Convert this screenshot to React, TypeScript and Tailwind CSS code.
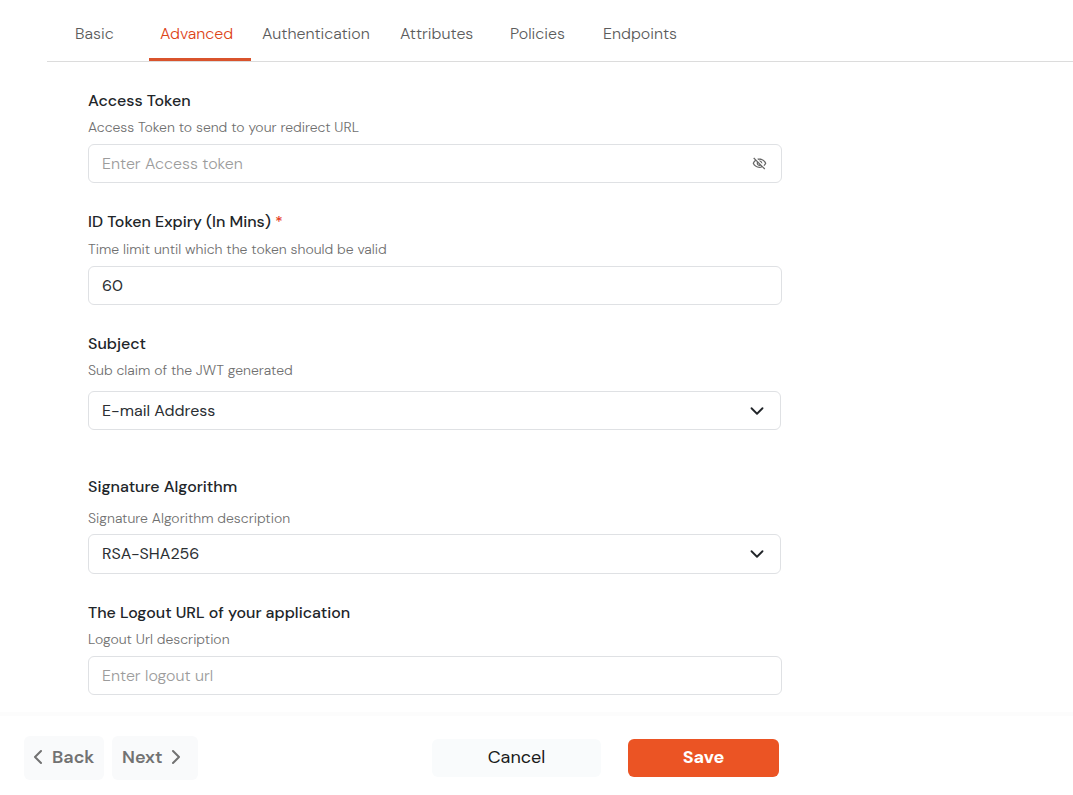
import type { ReactNode } from "react";
import { ChevronDown, ChevronLeft, ChevronRight } from "lucide-react";
import { MdOutlineVisibilityOff } from "react-icons/md";
import clsx from "clsx";

const tabs = [
  { label: "Basic", width: "w-[85px]" },
  { label: "Advanced", width: "w-[102px]", active: true },
  { label: "Authentication", width: "w-[138px]" },
  { label: "Attributes", width: "w-[110px]" },
  { label: "Policies", width: "w-[93px]" },
  { label: "Endpoints", width: "w-[102px]" },
];

const control =
  "block w-full rounded-md border border-[#dfe1e4] bg-white px-[13px] text-base text-[#2b2f33] outline-none placeholder:font-light placeholder:text-[#9c9c9c] focus:border-[#eb5424]";

type FieldProps = {
  id: string;
  label: string;
  hint: string;
  required?: boolean;
  hintClass: string;
  className?: string;
  children: ReactNode;
};

function Field({ id, label, hint, required, hintClass, className, children }: FieldProps) {
  return (
    <div className={className}>
      <label htmlFor={id} className="block text-base leading-6 font-medium text-[#212529]">
        {label}
        {required && <span className="text-[#e5391c]"> *</span>}
      </label>
      <p id={`${id}-hint`} className={clsx("text-sm leading-5 font-light text-[#6f6f6f]", hintClass)}>
        {hint}
      </p>
      {children}
    </div>
  );
}

function SelectBox({ id, options, className }: { id: string; options: string[]; className: string }) {
  return (
    <div className="relative mr-px">
      <select id={id} aria-describedby={`${id}-hint`} className={clsx(control, "appearance-none pr-12", className)}>
        {options.map((o) => (
          <option key={o}>{o}</option>
        ))}
      </select>
      <ChevronDown className="pointer-events-none absolute inset-y-0 right-[13px] my-auto size-[22px] text-[#212529]" aria-hidden />
    </div>
  );
}

export default function App() {
  return (
    <div className="flex min-h-screen flex-col bg-white font-['DM_Sans','Inter',sans-serif]">
      <nav className="ml-[47px] flex border-b border-[#dcdcdc] pl-[17px]">
        {tabs.map((tab) => (
          <button
            key={tab.label}
            type="button"
            className={clsx(
              "h-[61px] shrink-0 border-b-3 pt-[10px] pl-[11px] text-left text-base font-light",
              tab.width,
              tab.active ? "border-[#d9532c] text-[#dd4518]" : "border-transparent text-[#5c5c5c]",
            )}
          >
            {tab.label}
          </button>
        ))}
      </nav>

      <form className="flex flex-1 flex-col" onSubmit={(e) => e.preventDefault()}>
        <div className="mx-[88px] max-w-[694px] flex-1 pt-[27px] pb-4">
          <Field
            id="access-token"
            label="Access Token"
            hint="Access Token to send to your redirect URL"
            hintClass="mt-1 mb-[7px]"
          >
            <div className="relative">
              <input
                id="access-token"
                type="password"
                placeholder="Enter Access token"
                aria-describedby="access-token-hint"
                className={clsx(control, "h-[39px] pr-12")}
              />
              <button
                type="button"
                aria-label="Show access token"
                className="absolute inset-y-0 right-[14px] my-auto flex size-4 items-center text-[#666]"
              >
                <MdOutlineVisibilityOff className="size-[15px]" />
              </button>
            </div>
          </Field>

          <Field
            id="token-expiry"
            label="ID Token Expiry (In Mins)"
            hint="Time limit until which the token should be valid"
            required
            hintClass="mt-[5px] mb-[7px]"
            className="mt-[27px]"
          >
            <input
              id="token-expiry"
              type="text"
              inputMode="numeric"
              defaultValue="60"
              required
              aria-describedby="token-expiry-hint"
              className={clsx(control, "h-[39px]")}
            />
          </Field>

          <Field
            id="subject"
            label="Subject"
            hint="Sub claim of the JWT generated"
            hintClass="mt-1 mb-[11px]"
            className="mt-[27px]"
          >
            <SelectBox id="subject" options={["E-mail Address"]} className="h-[39px]" />
          </Field>

          <Field
            id="algorithm"
            label="Signature Algorithm"
            hint="Signature Algorithm description"
            hintClass="mt-[9px] mb-[6px]"
            className="mt-[45px]"
          >
            <SelectBox id="algorithm" options={["RSA-SHA256"]} className="h-10" />
          </Field>

          <Field
            id="logout-url"
            label="The Logout URL of your application"
            hint="Logout Url description"
            hintClass="mt-1 mb-[7px]"
            className="mt-[27px]"
          >
            <input
              id="logout-url"
              type="text"
              placeholder="Enter logout url"
              aria-describedby="logout-url-hint"
              className={clsx(control, "h-[39px]")}
            />
          </Field>
        </div>

        <footer className="flex items-center border-t-4 border-[#fcfcfc] px-6 pt-5 pb-[15px]">
          <div className="flex shrink-0 gap-2">
            <button
              type="button"
              className="flex h-11 w-20 items-center gap-[2px] rounded-md bg-[#f9fafb] pb-[2px] pl-[2px] text-lg font-semibold text-[#727272]"
            >
              <ChevronLeft className="size-6" aria-hidden />
              Back
            </button>
            <button
              type="button"
              className="flex h-11 w-[86px] items-center gap-[2px] rounded-md bg-[#f9fafb] pb-[2px] pl-[10px] text-lg font-semibold text-[#727272]"
            >
              Next
              <ChevronRight className="size-6" aria-hidden />
            </button>
          </div>
          <div className="ml-[234px] flex gap-[27px]">
            <button type="button" className="h-[38px] w-[169px] rounded-md bg-[#f9fbfc] pb-[2px] text-lg text-[#1a1a1a]">
              Cancel
            </button>
            <button type="submit" className="h-[38px] w-[151px] rounded-md bg-[#eb5424] pb-[2px] text-lg font-bold text-white">
              Save
            </button>
          </div>
        </footer>
      </form>
    </div>
  );
}
